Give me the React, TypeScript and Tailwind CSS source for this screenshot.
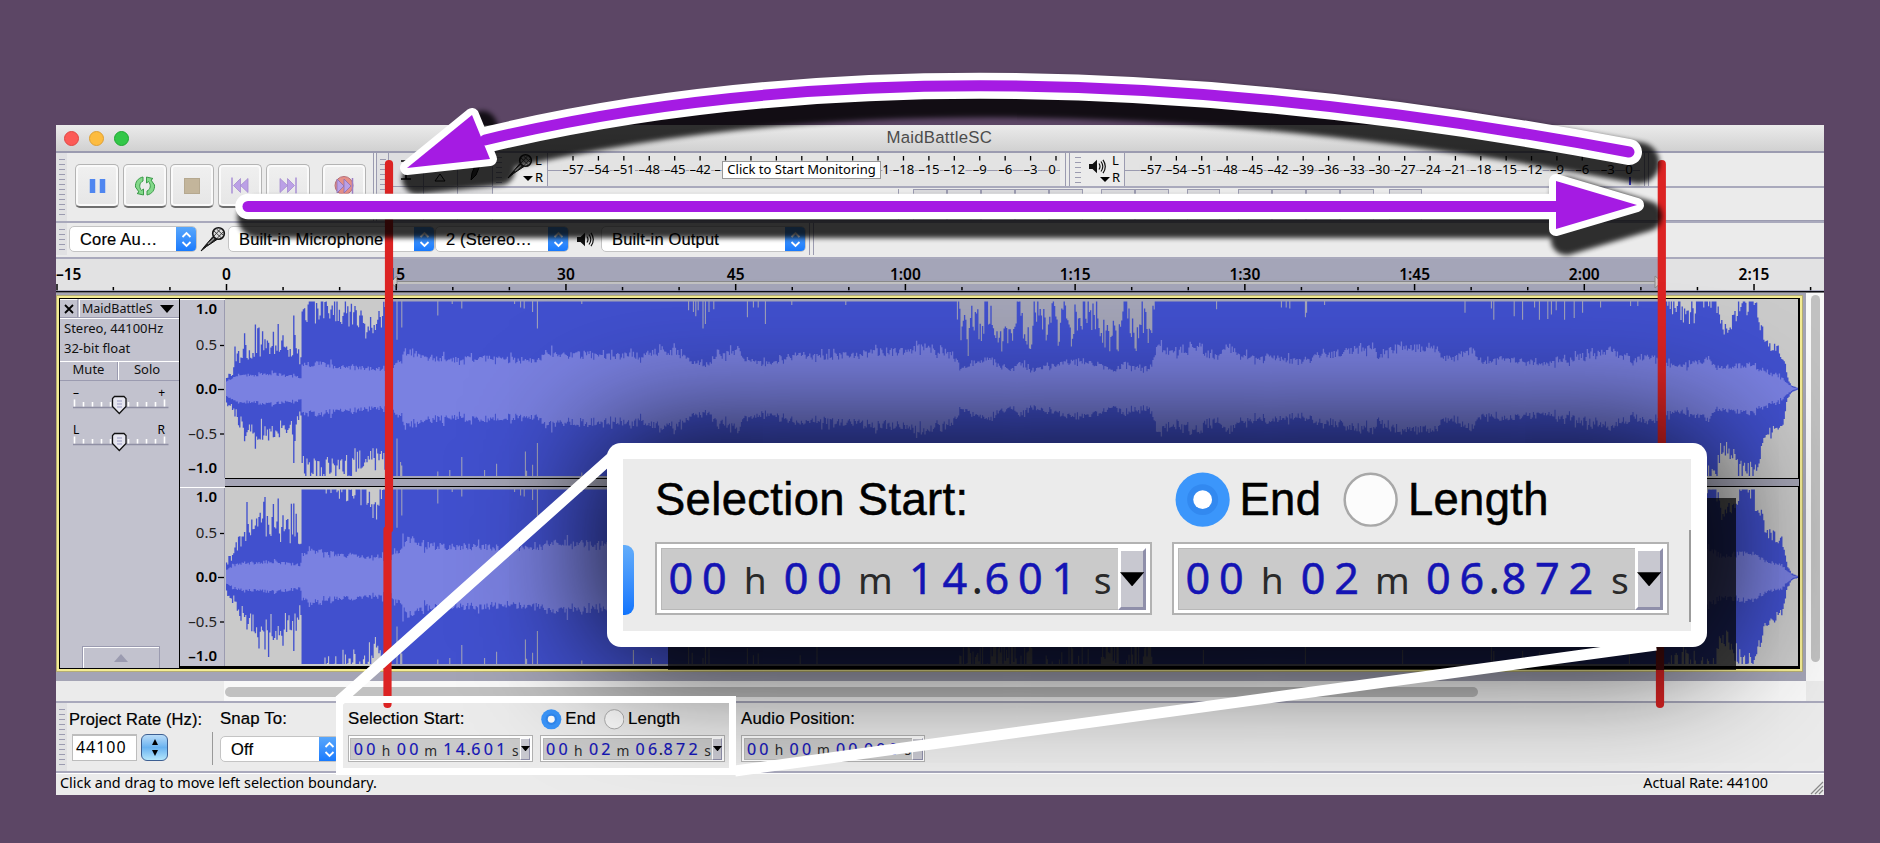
import React from "react";

type Pt = [number, number];

/* ---------- small shared pieces ---------- */

function Grip({ rows, className = "" }: { rows: number; className?: string }) {
  return (
    <div className={`flex w-[11px] shrink-0 flex-col items-center justify-center gap-[4px] bg-[#e1e1e3] ${className}`}>
      {Array.from({ length: rows }, (_, i) => (
        <div key={i} className="h-px w-[6px] shrink-0 bg-[#9b9bb0]" />
      ))}
    </div>
  );
}

function ToolButton({ children, className = "" }: { children?: React.ReactNode; className?: string }) {
  return (
    <div
      className={`flex h-[44px] w-[44px] items-center justify-center rounded-[5px] border border-b-2 border-[#b4b4b4] border-b-[#6e6e6e] bg-gradient-to-b from-[#f0f0f0] to-[#e6e6e6] shadow-[inset_0_0_0_2px_#fafafa] ${className}`}
    >
      {children}
    </div>
  );
}

function Chevrons() {
  return (
    <svg width="11" height="17" viewBox="0 0 11 17" fill="none" stroke="#fff" strokeWidth="1.8">
      <path d="M1.5 6 5.500 2l4 4M1.500 11l4 4 4-4" />
    </svg>
  );
}

function Select({ label, className = "" }: { label: string; className?: string }) {
  return (
    <div className={`flex h-[26px] shrink-0 overflow-hidden rounded-[5px] border border-[#c4c4c4] bg-white ${className}`}>
      <span className="flex-1 truncate pl-[10px] text-[16.5px] leading-[24px] tracking-[0.01em] [-webkit-text-stroke:0.2px] [text-overflow:clip]">
        {label}
      </span>
      <span className="-my-px -mr-px flex w-[21px] items-center justify-center bg-gradient-to-b from-[#5aa8fb] to-[#1478fd]">
        <Chevrons />
      </span>
    </div>
  );
}

function Mic({ className = "" }: { className?: string }) {
  return (
    <svg className={className} width="26" height="26" viewBox="0 0 26 26">
      <path d="M1 25 4 21 13 10.500 17 13.500 6.500 20.500Z" fill="#222" stroke="#111" strokeWidth="1" />
      <path d="M8 18 15 11.500" stroke="#999" strokeWidth="1.200" />
      <circle cx="18.500" cy="7.500" r="5.800" fill="#ddd" stroke="#111" strokeWidth="1.600" />
      <path d="M14 5l7.500 7M16.500 3l6.500 6M14 10l6.500-7M17 12.500l6.500-7" stroke="#333" strokeWidth=".9" />
    </svg>
  );
}

function Speaker() {
  return (
    <svg width="17" height="15" viewBox="0 0 17 15">
      <path d="M0 5h3.500L8 .8v13.400L3.500 10H0z" fill="#111" />
      <path d="M10 4.500q2 3 0 6M12 2.500q3.600 5 0 10M14 .8q4.600 6.700 0 13.400" fill="none" stroke="#111" strokeWidth="1.200" />
    </svg>
  );
}

function SkipGlyph({ flip = false }: { flip?: boolean }) {
  return (
    <svg width="18" height="19" viewBox="0 0 18 19" className={flip ? "-scale-x-100" : ""}>
      <path d="M1 1.500v16" stroke="#a98fd6" strokeWidth="1.500" />
      <path d="M9.500 2.500v14L2.500 9.500zM17 2.500v14L9.500 9.500z" fill="#bba0e6" stroke="#a58bcf" strokeWidth=".8" />
    </svg>
  );
}

/* ---------- level meters ---------- */

const playMarks = [
  "-57", "-54", "-51", "-48", "-45", "-42", "-39", "-36", "-33", "-30",
  "-27", "-24", "-21", "-18", "-15", "-12", "-9", "-6", "-3", "0",
];
/* the monitoring hint covers the middle of the record scale */
const recordMarks = [
  "-57", "-54", "-51", "-48", "-45", "-42", "-", "", "", "",
  "", "", "1", "-18", "-15", "-12", "-9", "-6", "-3", "0",
];

function MeterScale({ marks, first, last, width, peak }: { marks: string[]; first: number; last: number; width: number; peak?: boolean }) {
  return (
    <svg width={width} height="33" className="shrink-0 border-l border-[#9b9bb0] bg-[#e3e3e3]">
      <path d={`M0 17.500H${width}`} stroke="#9b9bb0" />
      {marks.map((m, i) => {
        const x = first + ((last - first) * i) / 19;
        const shift = m === "0" ? -4 : m === "-" ? -8 : m === "1" ? 8 : 0;
        const text = m.replace("-", "–");
        return (
          <g key={i}>
            <path d={`M${x} 3v4.500`} stroke="#000" strokeWidth="1.300" />
            {m && <rect x={x + shift - m.length * 3.7} y="11" width={m.length * 7.4} height="13" fill="#e3e3e3" />}
            {m && (
              <text x={x + shift} y="21" textAnchor="middle" fontSize="13.200" letterSpacing="-.1" fontFamily="Noto Sans, sans-serif">
                {text}
              </text>
            )}
          </g>
        );
      })}
      {peak && <path d={`M${last - 3} 24v8`} stroke="#3a3ac8" strokeWidth="2" />}
    </svg>
  );
}

function MeterHead({ icon }: { icon: React.ReactNode }) {
  return (
    <div className="flex">
      <div className="flex flex-col items-end">
        {icon}
        <div className="h-0 w-0 border-x-[5px] border-t-[5px] border-x-transparent border-t-black" />
      </div>
      <div className="ml-[2px] flex w-[12px] flex-col font-['Noto_Sans',sans-serif] text-[13px] leading-[17px]">
        <span className="-mt-px">L</span>
        <span>R</span>
      </div>
    </div>
  );
}

/* ---------- timeline ---------- */

const PX_PER_SEC = 11.315;

function TimeRuler() {
  const ticks = Array.from({ length: 32 }, (_, i) => (i - 3) * 5);
  return (
    <svg width="1768" height="34" className="block shrink-0">
      <rect width="1768" height="34" fill="#e2e2e3" />
      <rect x="335" width="1270" height="32" fill="#a4a5b8" />
      <path d="M340 23.500H1600" stroke="#c2c2c2" strokeWidth="3" />
      <path d="M340 22.500H1600" stroke="#8a8a8a" />
      <path d="M341 17v12l-7-6zM1599 17v12l7-6z" fill="#c9c9c9" stroke="#8a8a8a" />
      {ticks.map((t) => {
        const x = 170.5 + t * PX_PER_SEC;
        const major = t % 15 === 0;
        const label = t < 60 ? `${t}`.replace("-", "–") : `${Math.floor(t / 60)}:${String(t % 60).padStart(2, "0")}`;
        return (
          <g key={t}>
            <path d={`M${Math.max(x, 1)} ${major ? 25 : 28}V31.500`} stroke="#000" strokeWidth="1.500" />
            {major && (
              <text
                x={t === -15 ? 0 : x}
                y="21"
                textAnchor={t === -15 ? "start" : "middle"}
                fontSize="15.500"
                fontWeight="600"
                fontFamily="Noto Sans, sans-serif"
              >
                {label}
              </text>
            )}
          </g>
        );
      })}
      <rect y="31.500" width="1768" height="1.500" fill="#7c7ca0" />
      <rect y="32" width="1768" height="1.500" fill="#0b0b12" />
    </svg>
  );
}

/* ---------- waveform ---------- */

function lerp(points: Pt[], x: number) {
  if (x <= points[0][0]) return points[0][1];
  for (let i = 1; i < points.length; i++) {
    if (x <= points[i][0]) {
      const [x0, y0] = points[i - 1];
      const [x1, y1] = points[i];
      return y0 + ((y1 - y0) * (x - x0)) / (x1 - x0);
    }
  }
  return points[points.length - 1][1];
}

function random(seed: number) {
  let s = seed;
  return () => {
    s = (s * 1664525 + 1013904223) % 4294967296;
    return s / 4294967296;
  };
}

const breakdown: Pt[] = [
  [957, 1], [963, 0.62], [966, 0.9], [968, 0.5], [972, 0.9], [978, 0.75], [982, 0.66], [985, 1], [990, 0.8], [996, 0.55],
  [1000, 0.6], [1010, 0.58], [1015, 0.57], [1018, 1], [1024, 0.7], [1031, 0.48], [1034, 0.85], [1041, 0.75], [1047, 0.7],
  [1052, 1], [1056, 0.76], [1060, 0.66], [1064, 1], [1069, 0.72], [1072, 0.52], [1075, 1], [1080, 0.8], [1086, 1],
  [1090, 0.82], [1094, 1], [1098, 0.75], [1104, 0.65], [1110, 0.5], [1114, 0.62], [1118, 0.57], [1121, 0.95], [1127, 1],
  [1133, 0.72], [1137, 0.52], [1140, 0.95], [1147, 0.65], [1152, 0.57], [1154, 1.05],
];

const outro: Pt[] = [
  [1666, 1.1], [1672, 1], [1680, 1.02], [1690, 0.92], [1700, 1.08], [1716, 1.08], [1719, 0.78], [1724, 0.66], [1732, 0.78],
  [1738, 0.9], [1745, 1], [1753, 0.98], [1760, 0.75], [1766, 0.52], [1780, 0.42], [1784, 0.36], [1787, 0.14], [1791, 0.04], [1797, 0.01],
];

const peaksA: Pt[] = [
  [226, 0.14], [232, 0.18], [236, 0.32], [242, 0.4], [260, 0.47], [275, 0.5], [290, 0.46], [297, 0.4], [301, 0.28],
  [302, 0.95], [320, 0.96], [350, 0.9], [366, 0.75], [383, 0.8], [386, 1.12], [956, 1.12], ...breakdown, [1156, 1.12], ...outro,
];
const peaksB: Pt[] = [
  [226, 0.18], [232, 0.22], [240, 0.42], [250, 0.55], [270, 0.6], [290, 0.52], [297, 0.45], [301, 0.36],
  [302, 1.1], [366, 1.04], [370, 0.88], [376, 0.74], [381, 1.05], [386, 1.12], [956, 1.12], ...breakdown, [1156, 1.12], ...outro,
];
const rmsCurve: Pt[] = [
  [226, 0.08], [236, 0.14], [270, 0.17], [301, 0.13], [302, 0.26], [315, 0.29], [345, 0.24], [384, 0.22], [394, 0.26],
  [402, 0.3], [403, 0.42], [412, 0.42], [420, 0.36], [450, 0.34], [490, 0.34], [536, 0.32], [545, 0.4], [600, 0.37],
  [640, 0.38], [660, 0.43], [680, 0.43], [692, 0.3], [706, 0.26], [718, 0.36], [738, 0.43], [750, 0.3], [766, 0.28],
  [790, 0.37], [850, 0.37], [875, 0.42], [905, 0.42], [925, 0.48], [950, 0.38], [962, 0.24], [985, 0.34], [1010, 0.2],
  [1018, 0.32], [1031, 0.2], [1060, 0.28], [1090, 0.32], [1113, 0.19], [1125, 0.29], [1137, 0.23], [1150, 0.24],
  [1160, 0.45], [1180, 0.42], [1200, 0.44], [1218, 0.34], [1228, 0.49], [1240, 0.36], [1275, 0.35], [1305, 0.3],
  [1320, 0.38], [1340, 0.4], [1370, 0.48], [1378, 0.38], [1390, 0.45], [1432, 0.48], [1450, 0.32], [1472, 0.44],
  [1485, 0.29], [1505, 0.34], [1550, 0.28], [1570, 0.33], [1608, 0.44], [1630, 0.32], [1645, 0.36], [1665, 0.28],
  [1690, 0.27], [1708, 0.34], [1720, 0.23], [1735, 0.26], [1752, 0.27], [1765, 0.18], [1782, 0.13], [1787, 0.06],
  [1793, 0.01], [1797, 0],
];

const notchTop: Pt[] = [
  [397, 0.56], [402, 0.7], [438, 0.84], [452, 0.97], [462, 0.92], [514, 0.97], [520, 0.93], [524, 0.92], [533, 0.88],
  [537, 0.69], [582, 0.97], [689, 0.9], [693, 0.88], [696, 0.83], [698, 0.9], [703, 0.69], [706, 0.74], [709, 0.88],
  [714, 0.91], [748, 0.82], [754, 0.93], [758, 0.93], [766, 0.74], [792, 0.96], [846, 0.96], [1217, 0.91], [1281, 0.93],
  [1286, 0.93], [1290, 0.92], [1305, 0.82], [1307, 0.87], [1325, 0.96], [1465, 0.87], [1491, 0.92], [1494, 0.79],
  [1514, 0.83], [1523, 0.79], [1535, 0.93], [1539, 0.79], [1548, 0.8], [1552, 0.85], [1556, 0.9], [1565, 0.79],
  [1574, 0.81], [1583, 0.87], [1601, 0.93], [1631, 0.95], [1638, 0.95], [1676, 0.88], [1684, 0.76], [1689, 0.74], [1694, 0.75],
];
const notchBottom: Pt[] = [
  [397, 0.57], [401, 0.84], [402, 0.88], [438, 0.95], [450, 0.93], [462, 0.78], [485, 0.93], [496, 0.86], [525, 0.72],
  [526, 0.94], [533, 0.87], [537, 0.62], [582, 0.96], [634, 0.84], [651, 0.93], [689, 0.8], [692, 0.87], [703, 0.93],
  [706, 0.8], [709, 0.82], [748, 0.82], [754, 0.9], [758, 0.88], [800, 0.9], [817, 0.8], [1204, 0.84], [1305, 0.78],
  [1403, 0.84], [1491, 0.8], [1494, 0.85], [1523, 0.85], [1539, 0.86], [1556, 0.88], [1629, 0.82], [1683, 0.8],
];

function buildWave(peaks: Pt[], seed: number) {
  const rnd = random(seed);
  const step = 1.2;
  let peak = "";
  let rms = "";
  const near = (list: Pt[], x: number) => {
    const hit = list.find(([nx]) => Math.abs(nx - x) <= step / 2);
    return hit ? hit[1] : 1;
  };
  const half = 87;
  for (let x = 226.6; x < 1798; x += step) {
    const base = lerp(peaks, x);
    const quiet = x < 301;
    const dense = x > 1666 && x < 1720;
    const calm = x > 956 && x < 1156;
    const spread = base > 1.08 ? 0.05 : quiet ? 0.4 : dense ? 0.28 : calm ? 0.42 : x > 1720 ? 0.22 : 0.3;
    let up = base * (1 + (rnd() - 0.5) * spread * (1 + rnd() * 0.6));
    let down = (base + (calm ? 0.25 : 0)) * (1 + (rnd() - 0.5) * spread * (1 + rnd() * 0.6));
    if (quiet && x > 234 && rnd() > 0.85) {
      up *= 1.35;
      down *= 1.3;
    }
    if (Math.abs(x - 293.2) < 0.6) {
      up = 0.84;
      down = 0.85;
    }
    up = Math.min(1, up, near(notchTop, x));
    down = Math.min(1, down, near(notchBottom, x));
    const spike = rnd();
    const r0 = lerp(rmsCurve, x) * (1 + (rnd() - 0.5) * 0.24 + (spike > 0.88 ? 0.14 : spike < 0.08 ? -0.12 : 0));
    const r = Math.min(r0, up * 0.75);
    const r2 = Math.min(r0 * (1 + (rnd() - 0.5) * 0.08), down * 0.75);
    const ox = x - 225;
    peak += `M${ox.toFixed(1)} ${(89.5 - up * half).toFixed(1)}V${(90 + down * half).toFixed(1)}`;
    rms += `M${ox.toFixed(1)} ${(89.5 - r * half).toFixed(1)}V${(90 + r2 * half).toFixed(1)}`;
  }
  return { peak, rms };
}

const waveA = buildWave(peaksA, 7);
const waveB = buildWave(peaksB, 91);

function Channel({ wave, height }: { wave: { peak: string; rms: string }; height: number }) {
  return (
    <svg width="1573" height={height} className="block shrink-0">
      <rect width="1573" height={height} fill="#cacaca" />
      <rect x="167" width="1270" height={height} fill="#a4a5b8" />
      <path d={wave.peak} stroke="#4150ce" strokeWidth="1.350" />
      <path d={wave.rms} stroke="#7a81e1" strokeWidth="1.350" />
    </svg>
  );
}

function AmplitudeRuler({ height }: { height: number }) {
  const marks: { label: string; y: number; bold: boolean; tick?: number }[] = [
    { label: "1.0", y: 14.5, bold: true },
    { label: "0.5", y: 50.5, bold: false, tick: 46 },
    { label: "0.0", y: 94.5, bold: true, tick: 90 },
    { label: "–0.5", y: 139, bold: false, tick: 134.5 },
    { label: "–1.0", y: 173, bold: true },
  ];
  return (
    <svg width="45" height={height} className="block shrink-0 border-t border-white bg-[#c3c3cf]">
      {marks.map((m) => (
        <g key={m.label}>
          <text x="37" y={m.y - 0.5} textAnchor="end" fontSize="15" fontWeight={m.bold ? 600 : 400} fontFamily="Noto Sans, sans-serif" fill={m.bold ? "#000" : "#222"}>
            {m.label}
          </text>
          {m.tick && <path d={`M${m.bold ? 38 : 40} ${m.tick - 0.5}H45`} stroke="#000" strokeWidth="1.300" />}
        </g>
      ))}
      <path d={`M44.500 0V${height}`} stroke="#9b9bb0" />
    </svg>
  );
}

function TrackSlider({ left, right, className = "" }: { left: string; right: string; className?: string }) {
  return (
    <svg width="119" height="37" viewBox="60 0 119 37" className={`block font-['Noto_Sans',sans-serif] ${className}`}>
      <text x="73" y="14" fontSize="12">{left}</text>
      <text x="165" y="14" fontSize="12" textAnchor="end">{right}</text>
      <path d="M73 24.500H168.500" stroke="#8f8fa4" strokeWidth="1.300" />
      {Array.from({ length: 11 }, (_, i) => (
        <path key={i} d={`M${74.5 + i * 9} ${i % 10 ? 19 : 16.5}V23.500`} stroke="#fff" strokeWidth="1.600" />
      ))}
      <path d="M114.500 13.500h9.500l2 2v8l-6.700 7-6.800-7v-8z" fill="#e6e6f0" stroke="#111" strokeWidth="1.300" />
      <path d="M117 18h5M117 21h5M117 24h5" stroke="#9a9ac4" />
    </svg>
  );
}

function TrackPanel() {
  return (
    <div className="flex w-[119px] shrink-0 flex-col bg-[#c2c2ce] font-['Noto_Sans',sans-serif] text-[13px] text-[#111]">
      <div className="flex h-[19px] border-b border-[#9b9bb0]">
        <div className="flex w-[18px] items-center justify-center border-t border-r border-t-white border-r-[#9b9bb0]">
          <svg width="10" height="10" stroke="#000" strokeWidth="1.800"><path d="m1 1 8 8m0-8-8 8" /></svg>
        </div>
        <div className="ml-px flex flex-1 items-center justify-between border-t border-l border-white pr-[5px] pl-[2px]">
          <span className="text-[12.5px] leading-[17px] whitespace-nowrap">MaidBattleS</span>
          <span className="h-0 w-0 border-x-[7px] border-t-[8px] border-x-transparent border-t-black" />
        </div>
      </div>
      <div className="flex h-[43px] flex-col border-t border-white pl-[4px] leading-[20px] whitespace-nowrap">
        <span className="-mt-px">Stereo, 44100Hz</span>
        <span>32-bit float</span>
      </div>
      <div className="flex h-[20px] border-y border-t-white border-b-[#9b9bb0] text-center leading-[15px]">
        <div className="w-[58px] border-r border-[#9b9bb0]">Mute</div>
        <div className="flex-1 border-l border-white pr-[4px]">Solo</div>
      </div>
      <TrackSlider left="–" right="+" className="mt-[2px]" />
      <TrackSlider left="L" right="R" />
      <div className="mt-auto ml-[22px] flex h-[22px] w-[78px] items-center justify-center border border-b-0 border-[#9b9bb0] shadow-[inset_1px_1px_0_#fff]">
        <div className="h-0 w-0 border-x-[7px] border-b-[8px] border-x-transparent border-b-[#9b9bb0]" />
      </div>
    </div>
  );
}

/* ---------- selection bar ---------- */

function TimeBox({ h, m, s, className = "" }: { h: string; m: string; s: string; className?: string }) {
  const [sec, ms] = s.split(".");
  const digits = (v: string) =>
    v.split("").map((c, i) => (
      <span key={i} className="w-[0.775em] text-center text-[#1414b4] [-webkit-text-stroke:0.012em]">
        {c}
      </span>
    ));
  const unit = "text-center text-[0.86em] leading-[1.67em] text-[#2a2a2a]";
  return (
    <div className={`flex h-[1.69em] w-[11.5em] items-stretch border-[0.06em] border-[#b2b2b2] bg-white p-[0.09em] ${className}`}>
      <div className="flex flex-1 border-[0.04em] border-r-0 border-[#b8b8b8] bg-[#cacaca] pl-[0.05em] font-['Noto_Sans',sans-serif] leading-[1.34em] text-[#222]">
        {digits(h)}
        <span className={`w-[1.3em] ${unit}`}>h</span>
        {digits(m)}
        <span className={`w-[1.57em] ${unit}`}>m</span>
        {digits(sec)}
        <span className="w-[0.2em] text-center">.</span>
        {digits(ms)}
        <span className={`w-[0.78em] pl-[0.36em] ${unit}`}>s</span>
      </div>
      <div className="flex w-[0.64em] shrink-0 items-center justify-center border-[0.07em] border-t-white border-r-[#8f8faa] border-b-[#8f8faa] border-l-white bg-[#c8c8d0]">
        <svg className="h-[0.34em] w-[0.56em] shrink-0" viewBox="0 0 12 7"><path d="M0 0h12L6 7z" /></svg>
      </div>
    </div>
  );
}

function Radio({ on = false }: { on?: boolean }) {
  return (
    <svg className="h-[1.28em] w-[1.28em] shrink-0" viewBox="0 0 20 20">
      {on ? (
        <>
          <circle cx="10" cy="10" r="9.800" fill="#3b96fb" />
          <circle cx="10" cy="10" r="5.600" fill="#3289f0" />
          <circle cx="10" cy="10" r="3.400" fill="#fff" />
        </>
      ) : (
        <circle cx="10" cy="10" r="9.400" fill="#fcfcfc" stroke="#a8a8a8" strokeWidth=".9" />
      )}
    </svg>
  );
}

function FieldLabel({ children }: { children: React.ReactNode }) {
  return (
    <span className="h-[1.33em] whitespace-nowrap">
      <span className="block text-[1.05em] leading-[1.23em] tracking-[0.008em] [-webkit-text-stroke:0.012em]">{children}</span>
    </span>
  );
}

function SelectionFields({ className = "" }: { className?: string }) {
  return (
    <div className={`flex ${className}`}>
      <div className="flex w-[11.97em] shrink-0 flex-col gap-[0.3em]">
        <FieldLabel>Selection Start:</FieldLabel>
        <TimeBox h="00" m="00" s="14.601" />
      </div>
      <div className="flex w-[12.63em] shrink-0 flex-col gap-[0.3em]">
        <div className="flex h-[1.33em] items-start">
          <span className="ml-[0.06em]" />
          <Radio on />
          <span className="ml-[0.22em] w-[2.4em]">
            <FieldLabel>End</FieldLabel>
          </span>
          <Radio />
          <span className="ml-[0.22em]">
            <FieldLabel>Length</FieldLabel>
          </span>
        </div>
        <TimeBox h="00" m="02" s="06.872" />
      </div>
    </div>
  );
}

/* ---------- toolbars ---------- */

function TransportBar() {
  return (
    <div className="flex w-[318px] shrink-0 border-r border-[#9b9bb0]">
      <Grip rows={12} />
      <div className="flex items-start gap-[3.700px] pt-[11px] pl-[8px]">
        <ToolButton>
          <svg width="17" height="16"><path d="M3.500 1v14M13.500 1v14" stroke="#4f86f0" strokeWidth="5.500" /></svg>
        </ToolButton>
        <ToolButton>
          <svg width="22" height="22" viewBox="0 0 22 22" fill="#83d98a" stroke="#3b9a49" strokeWidth="1">
            <path d="M9 2C4 3 1 7 1.500 12L5 17l-2 1.500 6.500 1.500V14L7.500 15.500C4.500 12 5.500 7.500 9 6z" />
            <path d="M13 20c5-1 8-5 7.500-10L17 5l2-1.500L12.500 2v6l2-1.500c3 3.500 2 8-1.500 9.500z" />
          </svg>
        </ToolButton>
        <ToolButton>
          <div className="h-[16px] w-[16px] border border-[#b5a88f] bg-[#c3b59b]" />
        </ToolButton>
        <ToolButton><SkipGlyph /></ToolButton>
        <ToolButton><SkipGlyph flip /></ToolButton>
        <ToolButton className="ml-[9px]">
          <svg width="20" height="20" viewBox="0 0 20 20">
            <circle cx="10" cy="9.500" r="9" fill="#e58f88" stroke="#b46e78" />
            <path d="M3 3v14l7-7zM10 3v14l7-7z" fill="#bba0e6" stroke="#8d6fae" strokeWidth=".8" />
            <path d="M18.500 2v16" stroke="#9c7fc6" strokeWidth="1.500" />
          </svg>
        </ToolButton>
      </div>
    </div>
  );
}

function ToolPalette() {
  const cell = "flex items-center justify-center border-r border-b border-[#9b9bb0] bg-[#dedee0]";
  return (
    <div className="ml-[2px] flex w-[117px] shrink-0 border-l border-[#9b9bb0]">
      <Grip rows={12} />
      <div className="grid flex-1 grid-cols-3 grid-rows-2 border-l border-[#9b9bb0]">
        <div className={cell}>
          <svg width="12" height="20" stroke="#000" strokeWidth="1.600" fill="none"><path d="M1 1h10M6 1v18M1 19h10" /></svg>
        </div>
        <div className={cell}>
          <svg width="14" height="26" stroke="#000" fill="none"><path d="M2 24h10l-5-7zM2 2h10L7 9z" /></svg>
        </div>
        <div className={cell}>
          <svg width="14" height="22" viewBox="0 0 14 22"><path d="m3 21 1-7L9 2l4 2-5 12z" stroke="#000" fill="#444" /></svg>
        </div>
        <div className={cell} />
        <div className={cell} />
        <div className={cell} />
      </div>
    </div>
  );
}

function EditRow() {
  const cell = "h-full border-x border-t border-[#9b9bb0] bg-[#d9d9dc]";
  return (
    <div className="flex h-[35px] border-b border-[#9b9bb0] pt-px">
      <div className="w-[406px] border-r border-[#9b9bb0]" />
      <div className="flex pl-[14px]">
        {[0, 1, 2, 3, 4].map((i) => (
          <div key={i} className={`${cell} w-[34px]`} />
        ))}
      </div>
      <div className="flex pl-[18px]">
        <div className={`${cell} w-[34px]`} />
        <div className={`${cell} w-[34px]`} />
      </div>
      <div className="flex pl-[18px]"><div className={`${cell} w-[33px]`} /></div>
      <div className="flex pl-[18px]">
        {[0, 1, 2, 3].map((i) => (
          <div key={i} className={`${cell} w-[34px]`} />
        ))}
      </div>
      <div className="flex pl-[15px]"><div className={`${cell} w-[33px]`} /></div>
    </div>
  );
}

/* ---------- annotations ---------- */

function Arrows() {
  const arc = "M485 140Q960 26 1629 152";
  const arcHead = "M407 168 472 115 490 159Z";
  const line = "M248 206.500H1556";
  const lineHead = "M1556 181V229L1637 205Z";
  return (
    <svg className="pointer-events-none absolute top-0 left-0" width="1880" height="843" fill="none" strokeLinecap="round" strokeLinejoin="round">
      <defs>
        <filter id="soft" x="-5%" y="-30%" width="110%" height="160%">
          <feGaussianBlur stdDeviation="2.800" />
        </filter>
      </defs>
      <g filter="url(#soft)" opacity=".8" transform="translate(10 11)" stroke="#000" fill="none">
        <path d={arc} strokeWidth="41" />
        <path d={arcHead} strokeWidth="30" fill="#000" />
        <path d={line} strokeWidth="41" />
        <path d={lineHead} strokeWidth="30" fill="#000" />
      </g>
      <g stroke="#fff" fill="none">
        <path d={arc} strokeWidth="26" />
        <path d={arcHead} strokeWidth="14" fill="#fff" />
        <path d={line} strokeWidth="25.500" />
        <path d={lineHead} strokeWidth="14" fill="#fff" />
      </g>
      <g stroke="#a51be3">
        <path d={arc} strokeWidth="11" />
        <path d={line} strokeWidth="11" />
      </g>
      <path d={arcHead} fill="#a51be3" />
      <path d={lineHead} fill="#a51be3" />
    </svg>
  );
}

function ZoomPanel() {
  return (
    <>
      <div className="absolute top-[373px] left-[612px] h-[172px] w-[1068px] bg-black/70" />
      <div className="absolute top-[318px] left-[551px] h-[204px] w-[1100px] rounded-[14px] bg-white p-[16px] shadow-[0_0_130px_8px_rgba(0,0,0,0.9)]">
        <div className="flex h-full overflow-hidden bg-[#ebebeb]">
          <div className="mt-[86px] h-[70px] w-[11px] shrink-0 rounded-r-[9px] bg-gradient-to-b from-[#63adfa] to-[#0f74fd]" />
          <SelectionFields className="ml-[21px] w-[1034px] shrink-0 pt-[13px] text-[43.2px]" />
          <div className="mt-[71px] h-[92px] w-[2px] shrink-0 bg-[#9c9c9c]" />
        </div>
      </div>
    </>
  );
}

/* ---------- app ---------- */

export default function App() {
  return (
    <div className="relative h-[843px] w-[1880px] overflow-hidden bg-[#5c4665] pt-[125px] pl-[56px] font-['Liberation_Sans',Arial,sans-serif] text-black">
      <div className="relative flex h-[670px] w-[1768px] flex-col overflow-hidden bg-[#ebebeb]">
        {/* title bar */}
        <div className="flex h-[28px] shrink-0 items-center border-b-2 border-[#9b9bb0] bg-gradient-to-b from-[#ebebeb] to-[#d1d1d1] pl-[7.500px]">
          <div className="flex w-[65px] gap-[10px]">
            <div className="h-[15px] w-[15px] rounded-full border border-[#e04743] bg-[#fc5b57]" />
            <div className="h-[15px] w-[15px] rounded-full border border-[#dea034] bg-[#fdbc40]" />
            <div className="h-[15px] w-[15px] rounded-full border border-[#1fa832] bg-[#33c748]" />
          </div>
          <div className="flex-1 pr-[74px] text-center text-[16.8px] tracking-[0.015em] text-[#4c4c4c]">MaidBattleSC</div>
        </div>

        {/* transport, tools, meters */}
        <div className="flex h-[70px] shrink-0 border-b-2 border-[#a9a9bc]">
          <TransportBar />
          <ToolPalette />
          <div className="flex flex-1 flex-col">
            <div className="flex h-[35px] items-stretch border-b-2 border-[#a9a9bc]">
              <Grip rows={6} className="bg-transparent" />
              <div className="flex w-[43px] justify-end">
                <MeterHead icon={<Mic className="-mb-[3px]" />} />
              </div>
              <MeterScale marks={recordMarks} first={25} last={508} width={513} />
              <div className="ml-[5px] w-[5px] border-x border-[#9b9bb0]" />
              <Grip rows={6} className="ml-[2px] bg-transparent" />
              <div className="flex w-[41px] justify-end">
                <MeterHead icon={<span className="mt-[6px] mr-[4px] mb-[3px]"><Speaker /></span>} />
              </div>
              <MeterScale marks={playMarks} first={26} last={508} width={516} peak />
              <div className="ml-[4px] w-[5px] border-x border-[#9b9bb0]" />
            </div>
            <EditRow />
          </div>
        </div>

        {/* device toolbar */}
        <div className="flex h-[36px] shrink-0 items-center border-b-2 border-[#a9a9bc] pb-[2px] shadow-[0_1px_0_#fff]">
          <Grip rows={5} className="h-full" />
          <Select label="Core Au…" className="ml-[2px] w-[128px]" />
          <Mic className="mr-[2px] ml-[3px]" />
          <Select label="Built-in Microphone" className="w-[207px]" />
          <Select label="2 (Stereo…" className="w-[134px]" />
          <span className="mr-[7px] ml-[8px]"><Speaker /></span>
          <Select label="Built-in Output" className="w-[205px]" />
          <div className="ml-[3px] h-full w-[5px] border-x border-[#9b9bb0]" />
        </div>

        <TimeRuler />

        {/* track area */}
        <div className="flex h-[388px] shrink-0">
          <div className="flex w-[1750px] flex-col bg-[#a4a4b5]">
            <div className="mt-[2px] mr-[3px] h-[377px] border border-[#b5ae72] bg-black">
              <div className="flex h-full border-2 border-[#f3eb94] bg-black p-px">
                <TrackPanel />
                <div className="ml-px flex flex-1 flex-col">
                  <div className="flex h-[179px]">
                    <AmplitudeRuler height={179} />
                    <Channel wave={waveA} height={179} />
                  </div>
                  <div className="flex h-[9px]">
                    <div className="w-[45px] bg-[#c3c3cf]" />
                    <div className="my-px flex-1 bg-[#a4a4b5]" />
                  </div>
                  <div className="flex h-[179px]">
                    <AmplitudeRuler height={179} />
                    <Channel wave={waveB} height={179} />
                  </div>
                </div>
              </div>
            </div>
          </div>
          <div className="flex w-[18px] justify-center bg-[#f8f8f8] pt-[2px]">
            <div className="h-[367px] w-[9px] rounded-full bg-[#c1c1c1]" />
          </div>
        </div>

        {/* horizontal scroll */}
        <div className="flex h-[22px] shrink-0 border-b-2 border-[#a9a9bc]">
          <div className="flex-1" />
          <div className="w-[1582px] bg-[#f8f8f8] pt-[6px] pl-px">
            <div className="h-[10px] w-[1253px] rounded-full bg-[#c1c1c1]" />
          </div>
          <div className="w-[18px]" />
        </div>

        {/* selection toolbar */}
        <div className="flex h-[70px] shrink-0 border-b-2 border-[#a9a9bc] text-[16px]">
          <Grip rows={12} />
          <div className="ml-[2px] flex w-[143px] flex-col gap-[0.3em] pt-[6px]">
            <span className="text-[15.7px]">
              <FieldLabel>Project Rate (Hz):</FieldLabel>
            </span>
            <div className="flex h-[27px]">
              <div className="ml-[3px] w-[65px] border border-t-2 border-[#bdbdbd] bg-white pl-[3px] font-['Noto_Sans',sans-serif] text-[16px] leading-[22px] tracking-[0.06em]">44100</div>
              <div className="ml-[4px] flex w-[27px] flex-col items-center justify-center gap-[5px] rounded-[6px] border border-[#3d5f92] bg-gradient-to-b from-[#b9dcf8] via-[#69b2f0] to-[#b4e6fb]">
                <div className="h-0 w-0 border-x-[3px] border-b-[6px] border-x-transparent border-b-black" />
                <div className="h-0 w-0 border-x-[3px] border-t-[6px] border-x-transparent border-t-black" />
              </div>
            </div>
          </div>
          <div className="mt-[29px] mr-[7px] h-[33px] w-px bg-[#999]" />
          <div className="flex w-[128px] flex-col gap-[0.3em] pt-[6px]">
            <FieldLabel>Snap To:</FieldLabel>
            <Select label="Off" className="mt-px w-[120px]" />
          </div>
          <SelectionFields className="pt-[6px] text-[16.06px]" />
          <div className="-ml-[2px] flex flex-col gap-[0.3em] pt-[6px]">
            <FieldLabel>Audio Position:</FieldLabel>
            <TimeBox h="00" m="00" s="00.000" />
          </div>
        </div>

        {/* status bar */}
        <div className="flex flex-1 items-start border-t border-white pl-[4px] font-['Noto_Sans',sans-serif] text-[14.4px]">
          <span className="flex-1 leading-[18px]">Click and drag to move left selection boundary.</span>
          <span className="leading-[18px]">Actual Rate: 44100</span>
          <svg className="ml-[42px] self-end" width="14" height="14" stroke="#888" strokeWidth="1.200"><path d="M1 13 13 1M5 13l8-8M9 13l4-4" /></svg>
        </div>

        {/* selection boundary markers */}
        <svg className="absolute top-0 left-0" width="1768" height="670" stroke="#dc2323" strokeWidth="8.200" strokeLinecap="round" strokeLinejoin="round" fill="none">
          <path d="M333 39V404M331.500 405V579" />
          <path d="M1605.800 39V404M1604 405V579" />
        </svg>

        <ZoomPanel />

        {/* callout frame */}
        <div className="absolute top-[571px] left-[280px] h-[79px] w-[400px] border-[7px] border-white" />
        <svg className="absolute top-0 left-0" width="1768" height="670" stroke="#fff" strokeWidth="11" fill="none">
          <path d="M283 576 557 331M679 646 1600 520" />
        </svg>
      </div>

      {/* monitoring tooltip */}
      <div className="absolute top-[161px] left-[722px] h-[18px] w-[159px] border border-[#999] bg-white text-center font-['Noto_Sans',sans-serif] text-[13px] leading-[15px] whitespace-nowrap">
        Click to Start Monitoring
      </div>

      <Arrows />
    </div>
  );
}
